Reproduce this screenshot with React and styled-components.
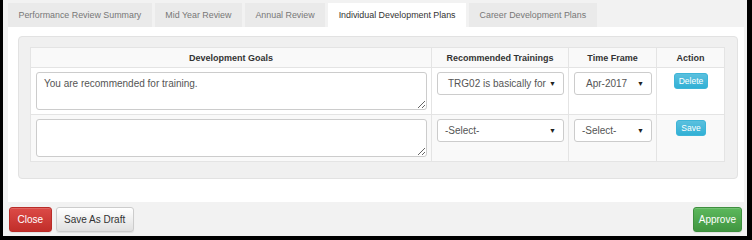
import React from "react";
import styled, { createGlobalStyle } from "styled-components";

const GlobalStyle = createGlobalStyle`
  html, body {
    margin: 0;
    padding: 0;
    background: #000;
  }
  body {
    font-family: "Liberation Sans", Arial, sans-serif;
    font-size: 10px;
    color: #555;
  }
`;

const Frame = styled.div`
  width: 744px;
  height: 236px;
  margin-left: 3px;
  background: #f2f2f2;
  display: flex;
  flex-direction: column;
`;

const TabBar = styled.div`
  display: flex;
  gap: 3px;
  padding: 3px 5px 0;
  height: 24px;
`;

const Tab = styled.div`
  padding: 0 10.5px;
  display: flex;
  align-items: center;
  background: ${p => (p.active ? "#fff" : "#eaeaea")};
  color: ${p => (p.active ? "#333" : "#777")};
  font-size: 8.9px;
`;

const Panel = styled.div`
  background: #fff;
  margin: 0 3px 0 5px;
  padding: 9px 6px 23px 10px;
`;

const Well = styled.div`
  background: #f0f0f0;
  border: 1px solid #e2e2e2;
  border-radius: 4px;
  padding: 10px 12px 16px 11px;
`;

const Table = styled.table`
  width: 100%;
  table-layout: fixed;
  border-collapse: collapse;
  border: 1px solid #ddd;
  background: #fff;
`;

const Th = styled.th`
  height: 19px;
  padding: 0;
  font-weight: bold;
  font-size: 9px;
  color: #333;
  text-align: center;
  border: 1px solid #e4e4e4;
  background: #f9f9f9;
  width: ${p => p.w || "auto"};
`;

const Tr = styled.tr`
  background: ${p => (p.striped ? "#f9f9f9" : "#fff")};
`;

const Td = styled.td`
  vertical-align: top;
  padding: 4px 4px 4px 5px;
  border: 1px solid #e4e4e4;
  text-align: ${p => (p.center ? "center" : "left")};
`;

const TextArea = styled.textarea`
  display: block;
  box-sizing: border-box;
  width: 100%;
  height: 38px;
  border: 1px solid #ccc;
  border-radius: 3px;
  padding: 5px 7px;
  font-family: "Liberation Sans", Arial, sans-serif;
  font-size: 10px;
  color: #555;
  background: #fff;
  margin: 0;
`;

const Select = styled.div`
  box-sizing: border-box;
  height: 23px;
  border: 1px solid #ccc;
  border-radius: 3px;
  background: #fff;
  display: flex;
  align-items: center;
  justify-content: space-between;
  padding: 0 7px 0 ${p => p.pad || 10}px;
  font-size: 10px;
  color: #555;
  white-space: nowrap;
  overflow: hidden;
`;

const Arrow = styled.span`
  font-size: 7px;
  color: #222;
`;

const SmallButton = styled.button`
  margin-top: 1px;
  font-family: "Liberation Sans", Arial, sans-serif;
  font-size: 8.5px;
  color: #fff;
  background: linear-gradient(#5bc0de, #31b0d5);
  border: 1px solid #3db5d8;
  border-radius: 3px;
  padding: 2px 4px;
  line-height: 10px;
`;

const Footer = styled.div`
  flex: 1;
  display: flex;
  align-items: center;
  justify-content: space-between;
  padding: 1px 5px 0 6px;
`;

const Group = styled.div`
  display: flex;
  gap: 4px;
`;

const colors = {
  danger: ["#dc4b47", "#c12e2a", "#b92c28", "#fff"],
  success: ["#5cb85c", "#419641", "#3e8f3e", "#fff"],
  default: ["#fff", "#e0e0e0", "#ccc", "#333"]
};

const Button = styled.button`
  height: 25px;
  padding: 0 ${p => p.px || 7.5}px;
  font-family: "Liberation Sans", Arial, sans-serif;
  font-size: 10px;
  border-radius: 3px;
  background: linear-gradient(${p => colors[p.kind][0]}, ${p => colors[p.kind][1]});
  border: 1px solid ${p => colors[p.kind][2]};
  color: ${p => colors[p.kind][3]};
  box-shadow: inset 0 1px 0 rgba(255, 255, 255, 0.15), 0 1px 1px rgba(0, 0, 0, 0.075);
`;

const tabs = [
  "Performance Review Summary",
  "Mid Year Review",
  "Annual Review",
  "Individual Development Plans",
  "Career Development Plans"
];

const App = () => (
  <Frame>
    <GlobalStyle />
    <TabBar>
      {tabs.map((t, i) => (
        <Tab key={t} active={i === 3}>
          {t}
        </Tab>
      ))}
    </TabBar>
    <Panel>
      <Well>
        <Table>
          <thead>
            <tr>
              <Th>Development Goals</Th>
              <Th w="136px">Recommended Trainings</Th>
              <Th w="87px">Time Frame</Th>
              <Th w="67px">Action</Th>
            </tr>
          </thead>
          <tbody>
            <Tr>
              <Td>
                <TextArea defaultValue="You are recommended for training." />
              </Td>
              <Td>
                <Select>
                  TRG02 is basically for <Arrow>▼</Arrow>
                </Select>
              </Td>
              <Td>
                <Select pad={11}>
                  Apr-2017 <Arrow>▼</Arrow>
                </Select>
              </Td>
              <Td center>
                <SmallButton>Delete</SmallButton>
              </Td>
            </Tr>
            <Tr striped>
              <Td>
                <TextArea />
              </Td>
              <Td>
                <Select pad={7}>
                  -Select- <Arrow>▼</Arrow>
                </Select>
              </Td>
              <Td>
                <Select pad={7}>
                  -Select- <Arrow>▼</Arrow>
                </Select>
              </Td>
              <Td center>
                <SmallButton>Save</SmallButton>
              </Td>
            </Tr>
          </tbody>
        </Table>
      </Well>
    </Panel>
    <Footer>
      <Group>
        <Button kind="danger">Close</Button>
        <Button kind="default">Save As Draft</Button>
      </Group>
      <Button kind="success" px={5}>
        Approve
      </Button>
    </Footer>
  </Frame>
);

export default App;
